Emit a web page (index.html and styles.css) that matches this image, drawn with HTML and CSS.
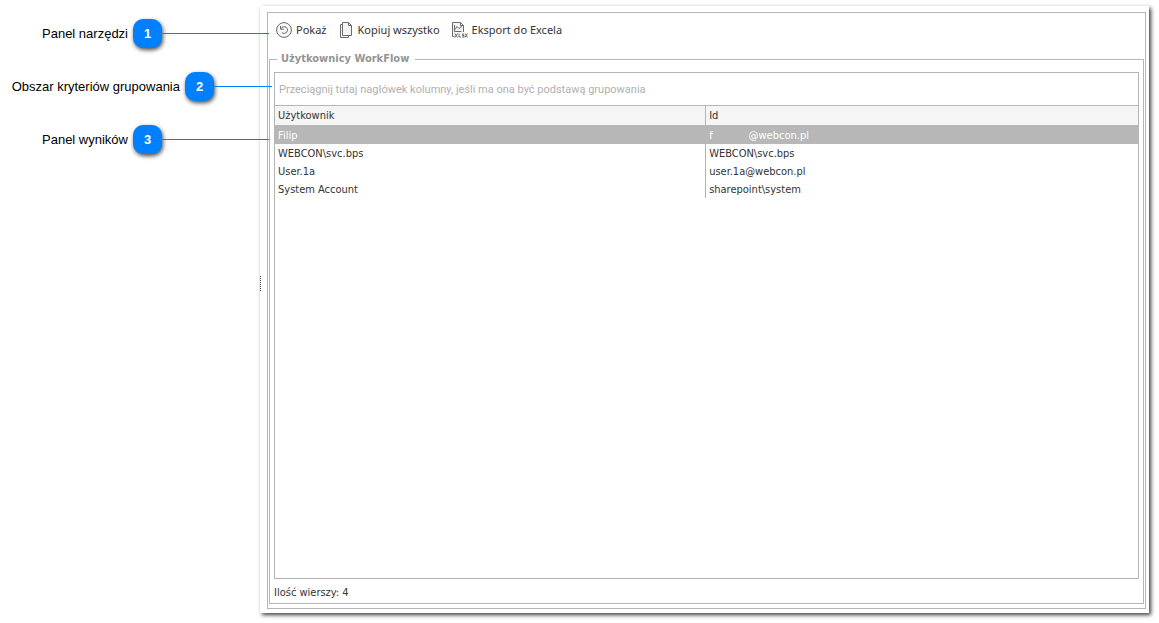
FILE: index.html
```html
<!DOCTYPE html>
<html lang="pl">
<head>
<meta charset="utf-8">
<title>Użytkownicy WorkFlow</title>
<link rel="stylesheet" href="styles.css">
</head>
<body>
<div class="page">
  <aside class="callouts">
    <div class="callout">
      <span class="callout-label">Panel narzędzi</span>
      <span class="callout-badge">1</span>
      <span class="callout-line"></span>
    </div>
    <div class="callout callout-wide">
      <span class="callout-label">Obszar kryteriów grupowania</span>
      <span class="callout-badge">2</span>
      <span class="callout-line"></span>
    </div>
    <div class="callout">
      <span class="callout-label">Panel wyników</span>
      <span class="callout-badge">3</span>
      <span class="callout-line"></span>
    </div>
  </aside>
  <main class="window">
    <div class="grip"></div>
    <div class="frame">
      <div class="toolbar">
        <button class="tool" type="button">
          <svg width="16" height="16" viewBox="0 0 16 16" fill="none" stroke="#6a6a6a" stroke-width="1">
            <circle cx="8" cy="8" r="7.4" fill="#f7f7f7"/>
            <path d="M4.800 6.800C6 4.500 8.500 4.200 10 5.200a3.400 3.400 0 0 1-1.500 6.200C7.500 11.500 6.600 11.200 6 10.700M4.500 4v3.200H8"/>
          </svg>
          <span>Pokaż</span>
        </button>
        <button class="tool" type="button">
          <svg width="15" height="16" viewBox="0 0 15 16" fill="#f5f5f5" stroke="#6a6a6a" stroke-width="1">
            <path d="M3.500 2.500h-2v13h8v-2"/>
            <path d="M3.500.5h6l3 3v10h-9z"/>
            <path d="M9.500.5v3h3" fill="none"/>
          </svg>
          <span>Kopiuj wszystko</span>
        </button>
        <button class="tool" type="button">
          <svg width="16" height="16" viewBox="0 0 16 16" fill="none" stroke="#6a6a6a" stroke-width="1">
            <path d="M2.500 14.500h-2V.5h8l3 3V10M8.500.5v3h3" fill="#f5f5f5"/>
            <path d="M2.500 3v6.500h7M3 7.500l2-3 2 2 3-2.500"/>
            <path d="M3 11.500l2.500 4M5.500 11.500l-2.500 4M7 11.500v3.500h2M12 12h-1.500v1.500H12V15h-2M13 11.500l2.500 4M15.500 11.500l-2.500 4"/>
          </svg>
          <span>Eksport do Excela</span>
        </button>
      </div>
      <fieldset class="group">
        <legend>Użytkownicy WorkFlow</legend>
        <div class="grid">
          <div class="group-hint">Przeciągnij tutaj nagłówek kolumny, jeśli ma ona być podstawą grupowania</div>
          <table class="results">
            <thead>
              <tr><th class="user" scope="col">Użytkownik</th><th scope="col">Id</th></tr>
            </thead>
            <tbody>
              <tr class="selected"><td>Filip</td><td>f<span class="blank"></span>@webcon.pl</td></tr>
              <tr><td>WEBCON\svc.bps</td><td>WEBCON\svc.bps</td></tr>
              <tr><td>User.1a</td><td>user.1a@webcon.pl</td></tr>
              <tr><td>System Account</td><td>sharepoint\system</td></tr>
            </tbody>
          </table>
        </div>
        <div class="status">Ilość wierszy: 4</div>
      </fieldset>
    </div>
  </main>
</div>
</body>
</html>
```
FILE: styles.css
```css
* { box-sizing: border-box; }
body {
  margin: 0;
  background: #fff;
  color: #333;
  font: 11px/18px "DejaVu Sans Condensed", Tahoma, sans-serif;
}
.page {
  display: flex;
  min-height: 100vh;
  padding: 6px 10px 10px 0;
}
.callouts {
  flex: 0 0 260px;
  display: flex;
  flex-direction: column;
  gap: 24px;
  padding-top: 13px;
  z-index: 1;
}
.callout {
  display: flex;
  align-items: center;
  height: 29px;
  margin-right: -9px;
}
.callout-wide { margin-right: -12px; }
.callout-label {
  flex: 0 0 128px;
  text-align: right;
  white-space: nowrap;
  color: #000;
  font: 13px/16px "Liberation Sans", Arial, sans-serif;
}
.callout-wide .callout-label { flex-basis: 180px; }
.callout-badge {
  flex: 0 0 29px;
  height: 29px;
  margin-left: 5px;
  border-radius: 10px;
  background: #0080ff;
  box-shadow: 1px 2px 4px rgba(0, 0, 0, .7);
  color: #fff;
  font: bold 13px/29px "Liberation Sans", Arial, sans-serif;
  text-align: center;
}
.callout-line {
  flex: 1;
  height: 1px;
  background: #0080ff;
}
.window {
  flex: 1;
  display: flex;
  position: relative;
  padding: 6px 3px 4px 7px;
  background: #fff;
  box-shadow: 2px 2px 4px rgba(0, 0, 0, .75);
}
.grip {
  position: absolute;
  left: 0;
  top: 270px;
  width: 1px;
  height: 15px;
  background: repeating-linear-gradient(#444 0 1px, transparent 1px 2px);
}
.frame {
  flex: 1;
  display: flex;
  flex-direction: column;
  border: 1px solid #b5b5b5;
  padding: 5px 1px 4px;
}
.toolbar {
  display: flex;
  gap: 12px;
  padding-left: 7px;
}
.tool {
  display: flex;
  align-items: center;
  gap: 4px;
  height: 24px;
  padding: 0;
  border: 0;
  background: none;
  color: #333;
  font: 11px/16px "Noto Sans", "Segoe UI", sans-serif;
}
.group {
  flex: 1;
  display: flex;
  flex-direction: column;
  min-width: 0;
  margin: 8px 0 0;
  padding: 4px 4px 1px;
  border: 1px solid #b5b5b5;
}
.group legend {
  margin-left: 3px;
  padding: 0 6px 0 4px;
  color: #959595;
  font-weight: bold;
}
.grid {
  flex: 1;
  border: 1px solid #b5b5b5;
}
.group-hint {
  height: 33px;
  padding: 8px 4px;
  border-bottom: 1px solid #b5b5b5;
  color: #b0b0b0;
  font-family: Roboto, Tahoma, sans-serif;
}
.results {
  width: 100%;
  border-collapse: collapse;
  table-layout: fixed;
}
.results th, .results td {
  height: 18px;
  padding: 1px 3px 0;
  line-height: 17px;
  text-align: left;
  font-weight: normal;
}
.results .user { width: 49.9%; }
.results th { height: 19px; padding-top: 0; background: #f5f5f5; }
.results th + th, .results td + td { border-left: 1px solid #b5b5b5; }
.results .selected td {
  height: 19px;
  background: #b7b7b7;
  color: #fff;
}
.blank { display: inline-block; width: 36px; }
.status { padding-top: 5px; }
```
